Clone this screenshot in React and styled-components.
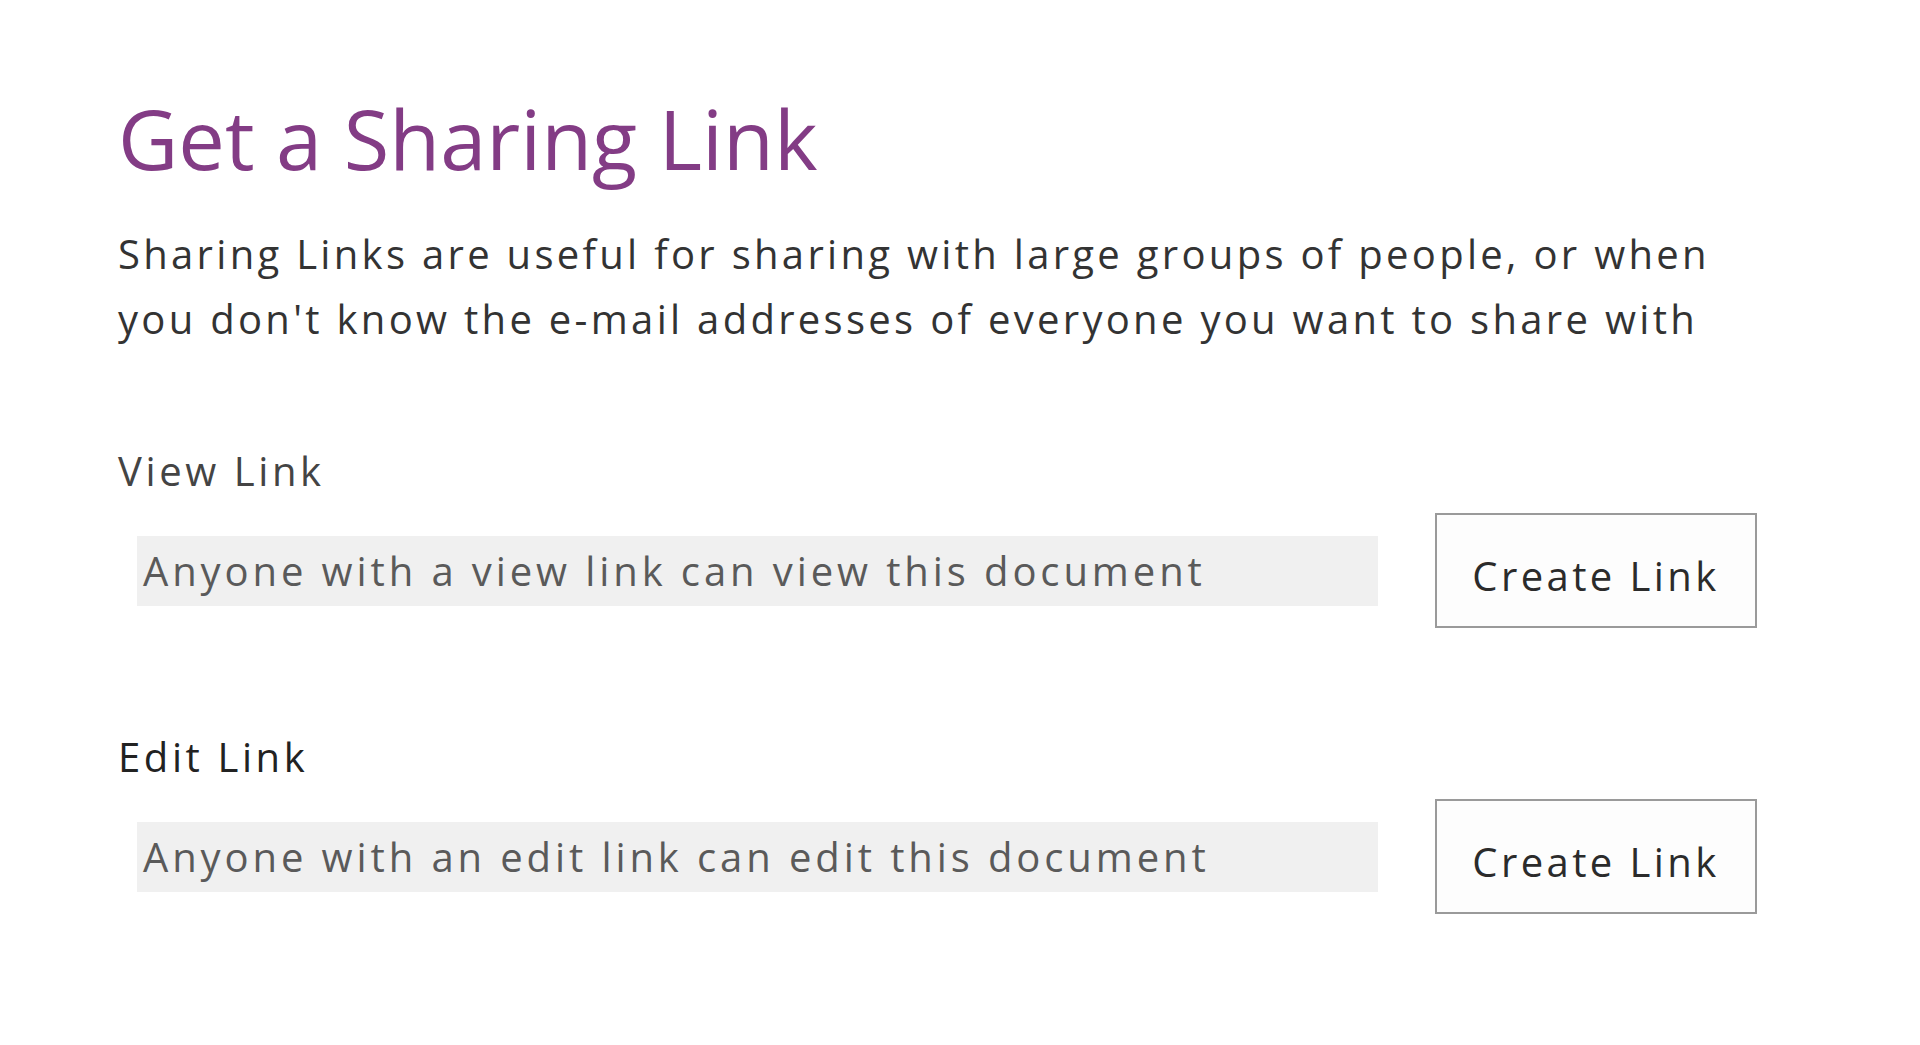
import styled, { createGlobalStyle } from 'styled-components'

const GlobalStyle = createGlobalStyle`
    html, body {
        margin: 0;
        padding: 0;
        background: #ffffff;
    }
    body {
        font-family: "Open Sans", "Noto Sans", sans-serif;
    }
`

const Page = styled.div`
    width: 1920px;
    height: 1045px;
    box-sizing: border-box;
    padding: 96px 0 0 118px;
    background: #ffffff;
`

const Title = styled.h1`
    margin: 0;
    font-size: 83px;
    line-height: 84px;
    font-weight: 400;
    color: #833c85;
`

const Intro = styled.p`
    margin: 41px 0 0;
    width: 1700px;
    font-size: 40px;
    line-height: 65px;
    letter-spacing: 3.3px;
    color: #333333;
`

const Section = styled.section`
    margin-top: ${(p) => p.$gap}px;
`

const Label = styled.div`
    font-size: 40px;
    line-height: 48px;
    letter-spacing: 3.6px;
    color: ${(p) => p.$color};
`

const Row = styled.div`
    display: flex;
    align-items: center;
    margin-top: 18px;
    height: 115px;
`

const LinkField = styled.div`
    display: flex;
    align-items: center;
    box-sizing: border-box;
    width: 1241px;
    height: 70px;
    margin-left: 19px;
    padding-left: 6px;
    background: #f0f0f0;
    font-size: 40px;
    letter-spacing: 3.9px;
    color: #5a5a5a;
    white-space: nowrap;
`

const CreateButton = styled.button`
    box-sizing: border-box;
    width: 322px;
    height: 115px;
    margin-left: 57px;
    padding: 10px 0 0;
    border: 2px solid #9a9a9a;
    background: #fdfdfd;
    font-family: "Open Sans", "Noto Sans", sans-serif;
    font-size: 40px;
    letter-spacing: 3.4px;
    color: #2b2b2b;
    cursor: pointer;
`

const links = [
    { label: 'View Link', color: '#444444', gap: 96, text: 'Anyone with a view link can view this document' },
    { label: 'Edit Link', color: '#222222', gap: 105, text: 'Anyone with an edit link can edit this document' },
]

function App() {
    return (
        <Page>
            <GlobalStyle />
            <Title>Get a Sharing Link</Title>
            <Intro>
                Sharing Links are useful for sharing with large groups of people, or when
                <br />
                you don't know the e-mail addresses of everyone you want to share with
            </Intro>
            {links.map((link) => (
                <Section key={link.label} $gap={link.gap}>
                    <Label $color={link.color}>{link.label}</Label>
                    <Row>
                        <LinkField>{link.text}</LinkField>
                        <CreateButton>Create Link</CreateButton>
                    </Row>
                </Section>
            ))}
        </Page>
    )
}

export default App
